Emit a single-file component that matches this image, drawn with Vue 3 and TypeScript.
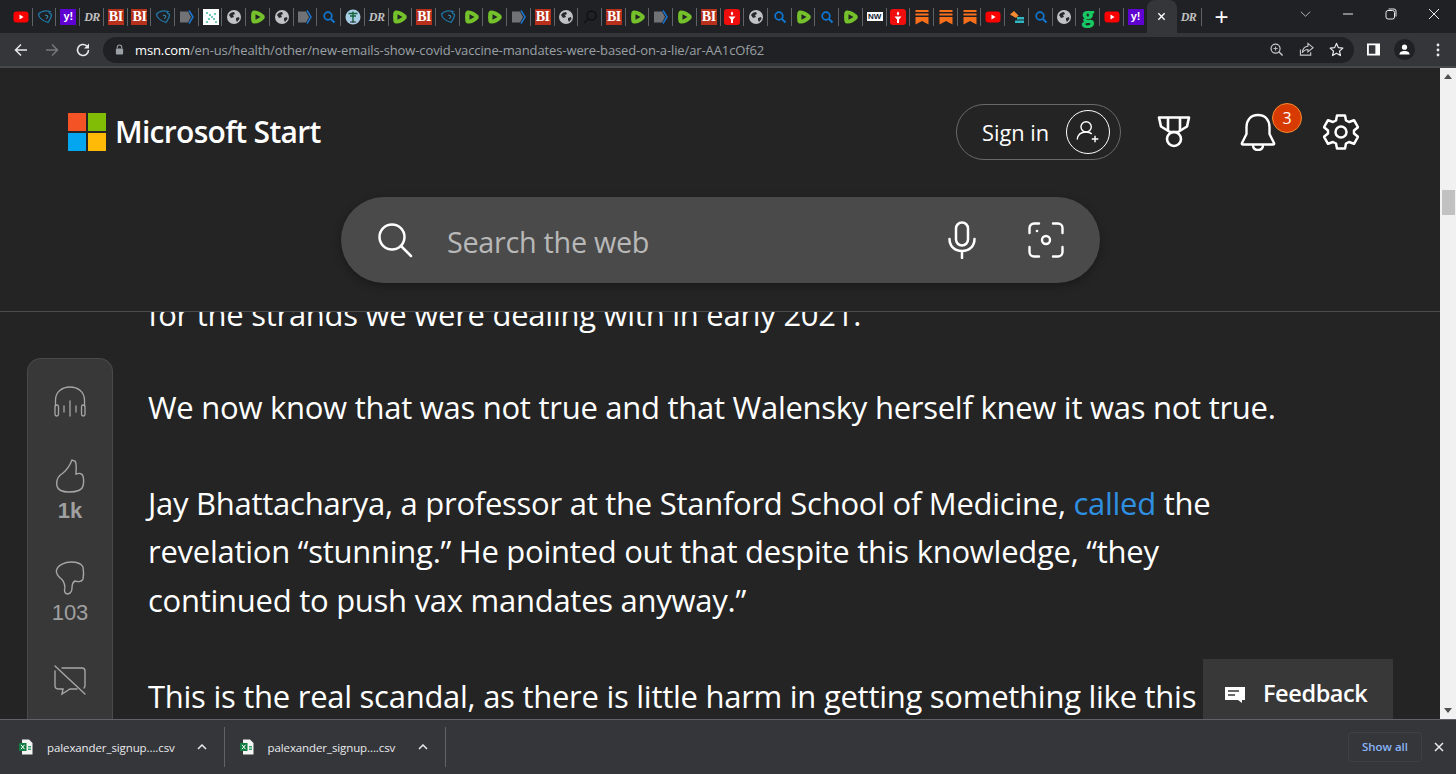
<script setup lang="ts">
const leftTabs: string[] = ['yt','shield','yahoo','dr','bi','bi','shield','arrow','qr','globe','rumble','globe','arrow','search','tree','dr','rumble','bi','shield','rumble','rumble','arrow','bi','globe','dark','bi','rumble','arrow','rumble','bi','torch','globe','search','rumble','search','rumble','news','torch','book','book','book','yt','bars','search','globe','g','yt','yahoo']
const downloads: string[] = ['palexander_signup....csv','palexander_signup....csv']
</script>

<template>
  <div class="screen">
    <div class="tabstrip">
      <div v-for="(t, i) in leftTabs" :key="i" class="tab">
        <svg v-if="t === 'yt'" class="fav" viewBox="0 0 16 16"><rect x="0.5" y="2.5" width="15" height="11" rx="3" fill="#f00"/><path d="M6.5 5.6 10.6 8 6.5 10.4z" fill="#fff"/></svg>
        <svg v-else-if="t === 'shield'" class="fav" viewBox="0 0 16 16" fill="none"><path d="M1.5 5C4 2 9 1 13 2.5c-1.500.5-1 1.500 1.500 3 0 3-1.500 5-3.500 8C6 12 2 9 1.500 5z" stroke="#1f77a8" stroke-width="1.300"/><path d="M8 6l3 1-1.500 3" stroke="#3b8fb8" stroke-width="1"/></svg>
        <div v-else-if="t === 'yahoo'" class="yahoo">y!</div>
        <div v-else-if="t === 'dr'" class="dr">DR</div>
        <div v-else-if="t === 'bi'" class="bi">BI</div>
        <svg v-else-if="t === 'arrow'" class="fav" viewBox="0 0 16 16"><path d="M1 2.500h8l3 5.500-3 5.500H1z" fill="#707276"/><path d="M10 1.500 14 8l-4 6.500" fill="none" stroke="#1976d2" stroke-width="1.500"/></svg>
        <svg v-else-if="t === 'qr'" class="fav" viewBox="0 0 16 16"><rect width="16" height="16" fill="#fff"/><path d="M3 3h2v2H3zM6 5h2v2H6zM8 7h2v2H8zM10 9h2v2h-2zM5 9h2v2H5zM11 4h2v2h-2zM3 12h2v2H3zM12 12h2v2h-2z" fill="#6fcbb8"/></svg>
        <svg v-else-if="t === 'globe'" class="fav" viewBox="0 0 16 16"><circle cx="8" cy="8" r="7" fill="#c0c2c5"/><path d="M3 6c1-2 3-3 5-3l1 2-2 1 1 2-3 1zM10 9l3-1 .500 2-2.500 3-1-2z" fill="#26282b"/></svg>
        <svg v-else-if="t === 'rumble'" class="fav" viewBox="0 0 16 16"><path d="M3.500 1.500c4-.500 8 2 10.500 4.500 1 1.200 1 2.800 0 4-2.500 2.500-6.500 5-10.500 4.500C2 14 1.500 13 1.300 11.500c-.3-2.300-.3-4.700 0-7C1.500 3 2 2 3.500 1.500z" fill="#74c12b"/><path d="M5.500 5.200 10.500 8l-5 2.800z" fill="#202124"/></svg>
        <svg v-else-if="t === 'search'" class="fav" viewBox="0 0 16 16" fill="none"><circle cx="7" cy="7" r="3.800" stroke="#0f78d4" stroke-width="1.700"/><path d="M10 10l3.500 3.500" stroke="#0f78d4" stroke-width="2"/></svg>
        <svg v-else-if="t === 'tree'" class="fav" viewBox="0 0 16 16"><circle cx="8" cy="8" r="7.500" fill="#a9cfe6"/><path d="M3.500 4.500h9M5 7h6M8 2.500v11" stroke="#16623a" stroke-width="1.400"/><path d="M5 13h6" stroke="#222" stroke-width="1"/></svg>
        <svg v-else-if="t === 'dark'" class="fav" viewBox="0 0 16 16" fill="none"><circle cx="9.500" cy="6.500" r="4.500" stroke="#111" stroke-width="1.500"/><path d="M6 10l-4 4" stroke="#111" stroke-width="1.500"/></svg>
        <svg v-else-if="t === 'torch'" class="fav" viewBox="0 0 16 16"><rect width="16" height="16" rx="3" fill="#f00d0d"/><path d="M8 2.500c1.500 1 1.500 2.800 0 4-1.500-1.200-1.500-3 0-4z" fill="#fff"/><path d="M4.500 7.500h7L9 10.500V14H7v-3.500z" fill="#fff"/></svg>
        <div v-else-if="t === 'news'" class="news">NW</div>
        <svg v-else-if="t === 'book'" class="fav" viewBox="0 0 16 16"><path d="M1.500 1h13v2h-13zM1.500 4.500h13v2h-13zM1.500 8h13v7.500L8 12l-6.500 3.500z" fill="#f6701c"/></svg>
        <svg v-else-if="t === 'bars'" class="fav" viewBox="0 0 16 16"><path d="M1 5.500 5 2l4.500 4.500L7 9z" fill="#f58a30"/><path d="M8 8h7v2.500H8zM6 11.500h9V14H6z" fill="#2fb8c4"/></svg>
        <div v-else-if="t === 'g'" class="gee">g</div>
      </div>
      <div class="tab active">
        <svg class="close" viewBox="0 0 10 10"><path d="M1.500 1.500l7 7M8.500 1.500l-7 7" stroke="#fff" stroke-width="1.500"/></svg>
      </div>
      <div class="tab after"><div class="dr">DR</div></div>
      <div class="plus">+</div>
      <div class="winctl">
        <svg class="winicon chev" viewBox="0 0 12 8"><path d="M1 1.500 6 6.500 11 1.500" fill="none" stroke="#bdc1c6" stroke-width="1"/></svg>
        <svg class="winicon" viewBox="0 0 12 12"><path d="M1 6h10" stroke="#e8eaed" stroke-width="1"/></svg>
        <svg class="winicon" viewBox="0 0 12 12" fill="none"><rect x="1" y="2.500" width="8.500" height="8.500" rx="2" stroke="#e8eaed"/><path d="M3.500 1h5.500a2 2 0 0 1 2 2v5.500" stroke="#e8eaed"/></svg>
        <svg class="winicon" viewBox="0 0 12 12"><path d="M1 1l10 10M11 1 1 11" stroke="#e8eaed" stroke-width="1"/></svg>
      </div>
    </div>

    <div class="toolbar">
      <svg class="navicon first" viewBox="0 0 16 16"><path d="M14 8H2.500M8 2.500 2.500 8 8 13.500" fill="none" stroke="#e8eaed" stroke-width="1.500"/></svg>
      <svg class="navicon" viewBox="0 0 16 16"><path d="M2 8h11.500M8 2.500 13.500 8 8 13.500" fill="none" stroke="#75787c" stroke-width="1.500"/></svg>
      <svg class="navicon" viewBox="0 0 16 16"><path d="M13.500 8A5.500 5.500 0 1 1 11.700 3.900" fill="none" stroke="#e8eaed" stroke-width="1.600"/><path d="M14 1.500V6.500H9z" fill="#e8eaed"/></svg>
      <div class="omnibox">
        <svg class="lock" viewBox="0 0 10 12"><path d="M2.500 5V3.500a2.500 2.500 0 0 1 5 0V5" fill="none" stroke="#9aa0a6" stroke-width="1.200"/><rect x="1" y="5" width="8" height="6.500" rx="1" fill="#9aa0a6"/></svg>
        <span class="url"><span class="host">msn.com</span>/en-us/health/other/new-emails-show-covid-vaccine-mandates-were-based-on-a-lie/ar-AA1cOf62</span>
        <svg class="omni" viewBox="0 0 16 16" fill="none"><circle cx="7" cy="7" r="4.800" stroke="#c4c7cb" stroke-width="1.300"/><path d="M10.500 10.500 14.500 14.500" stroke="#c4c7cb" stroke-width="1.600"/><path d="M4.800 7h4.400M7 4.800v4.400" stroke="#c4c7cb"/></svg>
        <svg class="omni" viewBox="0 0 16 16" fill="none"><path d="M1.500 8v6h11v-3" stroke="#c4c7cb" stroke-width="1.200"/><path d="M9.500 1.500 15 6l-5.500 4.500V8C7 8 5 9 3.500 11.500 3.800 7.500 6 4.800 9.500 4.500z" stroke="#c4c7cb" stroke-width="1.200"/></svg>
        <svg class="omni" viewBox="0 0 16 16" fill="none"><path d="M8 1.500l2 4.500 4.800.5-3.600 3.200 1 4.800L8 12l-4.200 2.500 1-4.800L1.200 6.500 6 6z" stroke="#e8eaed" stroke-width="1.300" stroke-linejoin="round"/></svg>
      </div>
      <svg class="panel" viewBox="0 0 14 14"><path d="M1 1.500h12v11H1z" fill="none" stroke="#fff" stroke-width="2"/><path d="M9 1.500h4v11H9z" fill="#fff"/></svg>
      <div class="avatar"><svg viewBox="0 0 14 14"><circle cx="7" cy="4.500" r="2.800" fill="#fff"/><path d="M1.500 12.500c0-3 2.500-4 5.500-4s5.500 1 5.500 4z" fill="#fff"/></svg></div>
      <svg class="kebab" viewBox="0 0 4 14"><circle cx="2" cy="2" r="1.400" fill="#e8eaed"/><circle cx="2" cy="7" r="1.400" fill="#e8eaed"/><circle cx="2" cy="12" r="1.400" fill="#e8eaed"/></svg>
    </div>

    <div class="browser">
      <div class="main">
        <header class="head">
          <div class="toprow">
            <div class="brand">
              <div class="mslogo"><i class="r"></i><i class="g"></i><i class="b"></i><i class="y"></i></div>
              <span class="brandname">Microsoft Start</span>
            </div>
            <div class="actions">
              <div class="signin">
                <span>Sign in</span>
                <div class="ring"><svg viewBox="0 0 32 32" fill="none" stroke="#fff" stroke-width="1.500"><circle cx="14" cy="10.500" r="5.500"/><path d="M4.500 24c.5-5 4-8 9.500-8 2.500 0 4.500.6 6 2"/><path d="M23.500 20v7M20 23.500h7"/></svg></div>
              </div>
              <svg class="medal" viewBox="0 0 34 34" fill="none" stroke="#fff" stroke-width="2.600"><path d="M2 2.500h30l-2 9-9 5.500h-8L4 11.500z" stroke-linejoin="round"/><path d="M11 3v12M23 3v12"/><circle cx="17" cy="24" r="7"/></svg>
              <div class="bellwrap">
                <svg class="bell" viewBox="0 0 36 38" fill="none" stroke="#fff" stroke-width="2.400" stroke-linejoin="round"><path d="M18 2C10 2 6.500 8 6.500 14v7L2 30c-.5 1 0 1.500 1 1.500h30c1 0 1.500-.5 1-1.500l-4.500-9v-7C29.500 8 26 2 18 2z"/><path d="M13 32c0 3 2 5 5 5s5-2 5-5"/></svg>
                <span class="badge">3</span>
              </div>
              <svg class="gear" viewBox="0 0 36 38" fill="none" stroke="#fff" stroke-width="2.500" stroke-linejoin="round"><circle cx="18" cy="19" r="5.500"/><path d="M14 2.500h8l1 5 3 1.500 5-1.800 4 7-4 3.300v3l4 3.300-4 7-5-1.800-3 1.500-1 5h-8l-1-5-3-1.500-5 1.800-4-7 4-3.300v-3L1 14.200l4-7 5 1.800 3-1.500z"/></svg>
            </div>
          </div>
          <div class="searchbox">
            <svg class="s-mag" viewBox="0 0 36 36" fill="none" stroke="#fff" stroke-width="2.500"><circle cx="15" cy="15" r="12.500"/><path d="M24 24 34 34" stroke-linecap="round"/></svg>
            <span class="placeholder">Search the web</span>
            <svg class="s-mic" viewBox="0 0 28 38" fill="none" stroke="#fff" stroke-width="2.500" stroke-linecap="round"><rect x="8" y="1.500" width="12" height="23" rx="6"/><path d="M1.500 18c0 7 5 12 12.500 12s12.500-5 12.500-12M14 30v7"/></svg>
            <svg class="s-cam" viewBox="0 0 36 36" fill="none" stroke="#fff" stroke-width="2.400" stroke-linecap="round"><path d="M11 1.500H6A4.500 4.500 0 0 0 1.500 6v5M25 1.500h5A4.500 4.500 0 0 1 34.500 6v5M1.500 25v5A4.500 4.500 0 0 0 6 34.500h5M34.500 25v5a4.500 4.500 0 0 1-4.500 4.500h-5"/><circle cx="18" cy="18" r="4"/><circle cx="9" cy="9" r="1.300" fill="#fff" stroke="none"/></svg>
          </div>
        </header>

        <div class="content">
          <aside class="rail">
            <svg class="r-ico headset" viewBox="0 0 32 32" fill="none" stroke="#a6a6a6" stroke-width="1.300" stroke-linecap="round"><path d="M1.500 20v-6C1.500 6 8 1 16 1s14.500 5 14.500 13v6"/><rect x="1" y="19" width="3.500" height="11" rx="1.700"/><rect x="27.500" y="19" width="3.500" height="11" rx="1.700"/><path d="M10 20v6M16 15v15M22 20v6"/></svg>
            <svg class="r-ico thumb" viewBox="0 0 30 34" fill="none" stroke="#a6a6a6" stroke-width="1.400"><path d="M17 1c-2 5-4 9-9 13-5 3-7 8-6 13 1 5 7 6 12 6 6 0 13-1 14-6 1-4 .5-8 0-10-1-3-4-3-7-2 0-5 1-10-1-13z"/></svg>
            <span class="cnt bold">1k</span>
            <svg class="r-ico thumbd" viewBox="0 0 30 34" fill="none" stroke="#a6a6a6" stroke-width="1.400"><path d="M13 33c3-1 4-3 4-6 0-3 1-6 3-7 3 1 7 1 8-2 1-4 .5-9 0-12-2-4-6-5-12-5C10 1 3 4 1.500 9c-1 3 2 7 5 9 3 3 4 8 3 11 0 2 1 4 3.500 4z"/></svg>
            <span class="cnt">103</span>
            <svg class="r-ico nocomment" viewBox="0 0 32 32" fill="none" stroke="#a6a6a6" stroke-width="1.400" stroke-linecap="round"><path d="M1 1 31 29"/><path d="M8 3h20c2 0 3 1 3 3v14c0 1 0 2-1 3M23 24h-7l-8 5 1-5H5c-2 0-4-1-4-3V6"/></svg>
          </aside>
          <article class="article">
            <p class="cut">for the strands we were dealing with in early 2021.</p>
            <p>We now know that was not true and that Walensky herself knew it was not true.</p>
            <p>Jay Bhattacharya, a professor at the Stanford School of Medicine, <a class="lnk">called</a> the revelation “stunning.” He pointed out that despite this knowledge, “they continued to push vax mandates anyway.”</p>
            <p class="nowrap">This is the real scandal, as there is little harm in getting something like this</p>
          </article>
          <div class="feedback">
            <svg viewBox="0 0 20 18"><path d="M0 1h20v13h-3v3l-4-3H0z" fill="#fff"/><path d="M3 5h11M3 9h7" stroke="#383838" stroke-width="1.600"/></svg>
            <span>Feedback</span>
          </div>
        </div>
      </div>
      <div class="scrollbar">
        <svg class="arrow" viewBox="0 0 8 5"><path d="M0 5 4 0l4 5z" fill="#505050"/></svg>
        <div class="thumbbar"></div>
        <svg class="arrow down" viewBox="0 0 8 5"><path d="M0 0 4 5l4-5z" fill="#505050"/></svg>
      </div>
    </div>

    <footer class="shelf">
      <div v-for="(d, i) in downloads" :key="i" class="dl">
        <svg class="xls" viewBox="0 0 14 16"><path d="M3 0.500h7l3.500 3.500v11.500H3z" fill="#f4f4f4"/><rect x="0" y="4" width="7.500" height="8" fill="#107c41"/><path d="M2 5.800 5.500 10.200M5.500 5.800 2 10.200" stroke="#fff" stroke-width="1"/><path d="M9 7h3v1.500H9zM9 9.500h3V11H9z" fill="#33a36b"/></svg>
        <span class="dlname">{{ d }}</span>
        <svg class="chevup" viewBox="0 0 10 6"><path d="M1 5 5 1l4 4" fill="none" stroke="#e8eaed" stroke-width="1.500"/></svg>
      </div>
      <div class="showall">Show all</div>
      <svg class="shelfx" viewBox="0 0 10 10"><path d="M1 1l8 8M9 1 1 9" stroke="#e8eaed" stroke-width="1.500"/></svg>
    </footer>
  </div>
</template>

<style scoped>
.screen { width: 1456px; height: 774px; display: flex; flex-direction: column; overflow: hidden; background: #242424; font-family: "Open Sans", "Noto Sans", sans-serif; }
.tabstrip { height: 33px; background: #202124; display: flex; align-items: center; padding-left: 9px; flex: none; }
.tab { width: 23.72px; height: 33px; display: flex; align-items: center; justify-content: center; position: relative; flex: none; }
.tab::after { content: ""; position: absolute; right: 0; top: 8px; height: 18px; width: 1px; background: #5f6368; }
.fav { width: 16px; height: 16px; display: block; }
.yahoo { width: 16px; height: 16px; background: #5f01d1; color: #fff; font: 700 11px/15px "Liberation Sans", sans-serif; text-align: center; }
.dr { color: #c0c0c0; font: italic 700 12px/16px "Liberation Serif", serif; letter-spacing: -.5px; }
.bi { width: 16px; height: 16px; background: #b7301b; color: #fff; font: 700 14px/16px "Liberation Serif", serif; text-align: center; letter-spacing: -.5px; }
.news { width: 16px; height: 9px; background: #fff; color: #123; font: 700 8px/9px "Liberation Sans", sans-serif; text-align: center; }
.gee { color: #17c964; font: 800 21px/18px "Open Sans", sans-serif; margin-top: -3px; }
.tab.active { width: 30px; height: 33px; margin-left: -1px; background: #35363a; border-radius: 8px 8px 0 0; }
.tab.active::after { display: none; }
.tab.after { width: 26px; margin-left: -1px; }
.close { width: 9px; height: 9px; }
.plus { color: #fff; font: 400 24px/33px "Liberation Sans", sans-serif; margin-left: 10px; width: 20px; text-align: center; }
.winctl { margin-left: auto; display: flex; align-items: center; height: 33px; padding-right: 16px; }
.winicon { width: 12px; height: 12px; margin-left: 31px; display: block; margin-top: -5px; }
.winicon.chev { margin-left: 0; height: 8px; width: 11px; }
.toolbar { height: 35px; background: #35363a; display: flex; align-items: center; flex: none; border-bottom: 2px solid #46484c; box-sizing: border-box; }
.navicon { width: 16px; height: 16px; margin-right: 15px; }
.navicon.first { margin-left: 13px; }
.omnibox { width: 1251px; height: 26px; background: #202124; border-radius: 13px; display: flex; align-items: center; margin-left: -3px; padding-left: 12px; box-sizing: border-box; padding-right: 10px; }
.lock { width: 9px; height: 11px; margin-right: 11px; flex: none; }
.url { color: #9aa0a6; font: 400 13px/26px "Open Sans", sans-serif; flex: 1; white-space: nowrap; letter-spacing: -.11px; }
.host { color: #fff; }
.omni { width: 15px; height: 15px; margin-left: 15px; }
.panel { width: 13px; height: 13px; margin-left: 13px; }
.avatar { width: 21px; height: 21px; background: #202124; border-radius: 50%; display: flex; align-items: center; justify-content: center; margin-left: 14px; }
.avatar svg { width: 13px; height: 13px; }
.kebab { width: 4px; height: 14px; margin-left: 21px; }

.browser { flex: 1; display: flex; min-height: 0; }
.main { flex: 1; display: flex; flex-direction: column; min-width: 0; background: #242424; }
.head { height: 244px; flex: none; border-bottom: 1px solid #4b4b4b; box-sizing: border-box; display: flex; flex-direction: column; }
.toprow { display: flex; align-items: center; justify-content: space-between; padding: 36px 81px 0 68px; height: 56px; }
.brand { display: flex; align-items: center; gap: 9px; }
.mslogo { width: 38px; height: 38px; display: grid; grid-template-columns: 18px 18px; grid-template-rows: 18px 18px; gap: 2px; }
.mslogo i { display: block; }
.r { background: #f35325; } .g { background: #81bc06; } .b { background: #05a6f0; } .y { background: #ffba08; }
.brandname { color: #fff; font-size: 30px; font-weight: 600; letter-spacing: -.7px; line-height: 40px; }
.actions { display: flex; align-items: center; }
.signin { width: 165px; height: 56px; border: 1px solid #6a6a6a; border-radius: 28px; box-sizing: border-box; display: flex; align-items: center; color: #fff; font-size: 21.800px; padding-left: 25px; justify-content: space-between; padding-right: 10px; }
.ring { width: 44px; height: 44px; border: 1.500px solid #fff; border-radius: 50%; box-sizing: border-box; display: flex; align-items: center; justify-content: center; }
.ring svg { width: 30px; height: 30px; }
.medal { width: 34px; height: 34px; margin-left: 36px; }
.bellwrap { position: relative; width: 36px; height: 38px; margin-left: 49px; }
.bell { width: 36px; height: 38px; display: block; }
.badge { position: absolute; left: 32px; top: -10px; width: 30px; height: 30px; border-radius: 50%; background: #d83b01; border: 1px solid #f28a2e; box-sizing: border-box; color: #fff; font-size: 16px; line-height: 28px; text-align: center; }
.gear { width: 36px; height: 38px; margin-left: 47px; }
.searchbox { width: 759px; height: 86px; margin: 37px 0 0 341px; border-radius: 43px; background: #4a4a4a; box-shadow: 0 3px 10px rgba(0,0,0,.3); display: flex; align-items: center; padding-left: 36px; box-sizing: border-box; }
.s-mag { width: 36px; height: 36px; flex: none; }
.placeholder { color: #b8b8b8; font-size: 28.800px; margin: 2px 0 0 34px; letter-spacing: -.3px; flex: 1; }
.s-mic { width: 28px; height: 38px; flex: none; }
.s-cam { width: 36px; height: 36px; flex: none; margin: 0 36px 0 52px; }

.content { flex: 1; min-height: 0; position: relative; display: flex; overflow: hidden; }
.rail { width: 86px; margin: 46px 0 0 27px; height: 420px; background: #383838; border: 1px solid #4a4a4a; border-bottom: 0; border-radius: 14px 14px 0 0; box-sizing: border-box; display: flex; flex-direction: column; align-items: center; padding-top: 27px; color: #a6a6a6; flex: none; }
.r-ico { display: block; }
.headset { width: 32px; height: 32px; }
.thumb { width: 30px; height: 34px; margin-top: 41px; }
.cnt { font: 400 22px/26px "Liberation Sans", sans-serif; color: #a0a0a0; margin-top: 5px; }
.cnt.bold { font-weight: 700; }
.thumbd { width: 30px; height: 34px; margin-top: 37px; }
.nocomment { width: 32px; height: 32px; margin-top: 39px; }
.article { flex: 1; margin: -22px 0 0 35px; padding-right: 150px; color: #fff; font-size: 31px; line-height: 48.700px; letter-spacing: -.265px; min-width: 0; }
.article p { margin: 0 0 46.800px; }
.article p.cut { margin-bottom: 44.500px; }
.nowrap { white-space: nowrap; }
.lnk { color: #2f8fe0; }
.feedback { position: absolute; right: 47px; bottom: 0; width: 190px; height: 60px; background: #383838; display: flex; align-items: center; color: #fff; font-size: 23.500px; font-weight: 600; letter-spacing: -.4px; box-sizing: border-box; padding: 8px 0 0 22px; gap: 18px; z-index: 2; }
.feedback svg { width: 20px; height: 18px; margin-top: 4px; }
.scrollbar { width: 16px; background: #f1f1f1; flex: none; display: flex; flex-direction: column; align-items: center; position: relative; padding-top: 6px; box-sizing: border-box; }
.arrow { width: 8px; height: 5px; }
.thumbbar { width: 13px; height: 25px; background: #c1c1c1; margin-top: 111px; }
.arrow.down { margin-top: auto; margin-bottom: 6px; }

.shelf { height: 55px; background: #35363a; border-top: 1px solid #5f6368; box-sizing: border-box; display: flex; align-items: center; flex: none; position: relative; z-index: 3; }
.dl { width: 221px; height: 40px; display: flex; align-items: center; border-right: 1px solid #5f6368; box-sizing: border-box; padding-left: 15px; }
.dl:first-child { width: 224.500px; padding-left: 19px; }
.xls { width: 14px; height: 16px; flex: none; }
.dlname { color: #e8eaed; font-size: 11.500px; margin-left: 14px; width: 129px; white-space: nowrap; letter-spacing: -.1px; }
.chevup { width: 10px; height: 6px; margin-left: 21px; }
.showall { margin-left: auto; width: 74px; height: 30px; border: 1px solid #3f4044; border-radius: 4px; box-sizing: border-box; color: #8ab4f8; font-size: 11.500px; line-height: 28px; text-align: center; font-weight: 600; }
.shelfx { width: 10px; height: 10px; margin: 0 12px 0 12px; }
</style>

<style>
html, body { margin: 0; background: #242424; overflow: hidden; }
</style>
